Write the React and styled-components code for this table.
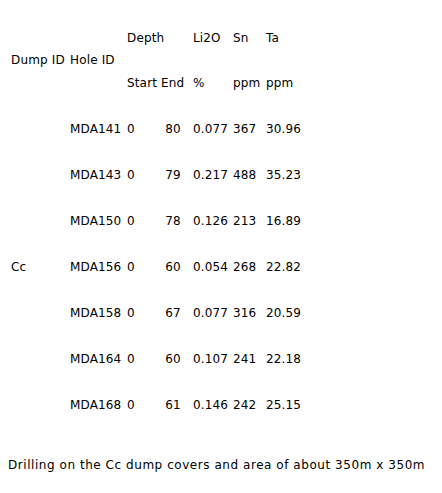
import React from "react";
import styled, { createGlobalStyle } from "styled-components";

const Global = createGlobalStyle`
  html, body { margin: 0; padding: 0; background: #fff; }
  body {
    font-family: "DejaVu Sans", Verdana, sans-serif;
    font-size: 12px;
    color: #000;
  }
`;

const Page = styled.div`
  width: 442px;
  height: 493px;
  box-sizing: border-box;
  padding-top: 27px;
  display: flex;
  flex-direction: column;
`;

const cols = "59px 57px 34px 32px 40px 33px 60px";

const HeadGrid = styled.div`
  display: grid;
  grid-template-columns: ${cols};
  grid-template-rows: 22px 23px 23px;
  padding-left: 11px;
  align-items: center;
`;

const BodyGrid = styled.div`
  display: grid;
  grid-template-columns: ${cols};
  grid-auto-rows: 46px;
  padding-left: 11px;
  margin-top: 11px;
  align-items: center;
`;

const Cell = styled.div`
  grid-column: ${(p) => p.$col} / span ${(p) => p.$span || 1};
  grid-row: ${(p) => p.$row} / span ${(p) => p.$rspan || 1};
  line-height: 15px;
  letter-spacing: 0.15px;
  white-space: nowrap;
  text-align: ${(p) => (p.$center ? "center" : "left")};
  padding-right: ${(p) => (p.$center ? "8px" : "0")};
`;

const Note = styled.p`
  margin: 30px 0 0 8px;
  line-height: 15px;
  letter-spacing: 0.55px;
  white-space: nowrap;
`;

const rows = [
  ["MDA141", "0", "80", "0.077", "367", "30.96"],
  ["MDA143", "0", "79", "0.217", "488", "35.23"],
  ["MDA150", "0", "78", "0.126", "213", "16.89"],
  ["MDA156", "0", "60", "0.054", "268", "22.82"],
  ["MDA158", "0", "67", "0.077", "316", "20.59"],
  ["MDA164", "0", "60", "0.107", "241", "22.18"],
  ["MDA168", "0", "61", "0.146", "242", "25.15"],
];

export default function App() {
  return (
    <Page>
      <Global />
      <HeadGrid>
        <Cell $col={3} $span={2} $row={1}>Depth</Cell>
        <Cell $col={5} $row={1}>Li2O</Cell>
        <Cell $col={6} $row={1}>Sn</Cell>
        <Cell $col={7} $row={1}>Ta</Cell>
        <Cell $col={1} $row={2}>Dump ID</Cell>
        <Cell $col={2} $row={2}>Hole ID</Cell>
        <Cell $col={3} $row={3}>Start</Cell>
        <Cell $col={4} $row={3}>End</Cell>
        <Cell $col={5} $row={3}>%</Cell>
        <Cell $col={6} $row={3}>ppm</Cell>
        <Cell $col={7} $row={3}>ppm</Cell>
      </HeadGrid>
      <BodyGrid>
        <Cell $col={1} $row={1} $rspan={7}>Cc</Cell>
        {rows.map((r, i) => (
          <React.Fragment key={r[0]}>
            <Cell $col={2} $row={i + 1}>{r[0]}</Cell>
            <Cell $col={3} $row={i + 1}>{r[1]}</Cell>
            <Cell $col={4} $row={i + 1} $center>{r[2]}</Cell>
            <Cell $col={5} $row={i + 1}>{r[3]}</Cell>
            <Cell $col={6} $row={i + 1}>{r[4]}</Cell>
            <Cell $col={7} $row={i + 1}>{r[5]}</Cell>
          </React.Fragment>
        ))}
      </BodyGrid>
      <Note>Drilling on the Cc dump covers and area of about 350m x 350m</Note>
    </Page>
  );
}
